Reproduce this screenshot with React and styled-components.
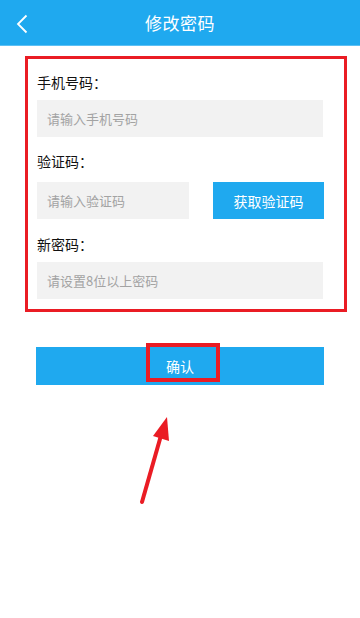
import React from "react";
import styled, { createGlobalStyle } from "styled-components";

const Global = createGlobalStyle`
  html, body { margin: 0; padding: 0; background: #fff; }
  body { font-family: "Noto Sans CJK SC", "Noto Sans", sans-serif; }
  * { box-sizing: border-box; }
`;

const Page = styled.div`
  position: relative;
  width: 360px;
  height: 618px;
  background: #fff;
  overflow: hidden;
`;

const Header = styled.header`
  height: 46px;
  background: #1fa9ef;
  display: flex;
  align-items: center;
  justify-content: center;
  position: relative;
  border-bottom: 1px solid #5cc0f4;
`;

const BackButton = styled.button`
  position: absolute;
  left: 12px;
  top: 12px;
  width: 20px;
  height: 24px;
  padding: 0;
  border: none;
  background: transparent;
  display: flex;
  align-items: center;
  justify-content: center;
`;

const Title = styled.h1`
  margin: 0;
  color: #fff;
  font-size: 17px;
  font-weight: 400;
  letter-spacing: 0.5px;
`;

const Form = styled.section`
  margin: 10px 13px 0 25px;
  border: 3px solid #ea1c24;
  padding: 13px 21px 10px 9px;
  display: flex;
  flex-direction: column;
`;

const Label = styled.div`
  font-size: 14px;
  color: #111;
  line-height: 20px;
  height: 20px;
  margin-top: ${(p) => p.$top || 0}px;
  margin-bottom: ${(p) => p.$gap}px;
`;

const Row = styled.div`
  display: flex;
  gap: 24px;
`;

const Input = styled.input`
  flex: ${(p) => (p.$narrow ? "0 0 152px" : "1 1 auto")};
  width: ${(p) => (p.$narrow ? "152px" : "100%")};
  height: 37px;
  border: none;
  outline: none;
  background: #f2f2f2;
  padding: 0 10px;
  font-family: "Noto Sans CJK SC", "Noto Sans", sans-serif;
  font-size: 13px;
  color: #333;
  &::placeholder { color: #a3a3a3; }
`;

const CodeButton = styled.button`
  flex: 0 0 111px;
  height: 37px;
  border: none;
  background: #1fa9ef;
  color: #fff;
  font-family: "Noto Sans CJK SC", "Noto Sans", sans-serif;
  font-size: 14px;
`;

const SubmitWrap = styled.div`
  margin: 35px 36px 0 36px;
  position: relative;
`;

const Submit = styled.button`
  width: 100%;
  height: 38px;
  border: none;
  background: #1fa9ef;
  color: #fff;
  font-family: "Noto Sans CJK SC", "Noto Sans", sans-serif;
  font-size: 14px;
  display: flex;
  align-items: center;
  justify-content: center;
`;

const Highlight = styled.span`
  position: absolute;
  left: 110px;
  top: -4px;
  width: 74px;
  height: 39px;
  border: 4px solid #ea1c24;
  pointer-events: none;
`;

const Arrow = styled.svg`
  position: absolute;
  left: 130px;
  top: 405px;
  width: 50px;
  height: 105px;
  overflow: visible;
`;

export default function App() {
  return (
    <Page>
      <Global />
      <Header>
        <BackButton aria-label="返回">
          <svg width="12" height="20" viewBox="0 0 12 20">
            <path d="M10.5 1.5 L2 10 L10.5 18.5" fill="none" stroke="#fff" strokeWidth="1.8" />
          </svg>
        </BackButton>
        <Title>修改密码</Title>
      </Header>
      <Form>
        <Label $gap={8}>手机号码：</Label>
        <Input placeholder="请输入手机号码" />
        <Label $top={14} $gap={11}>验证码：</Label>
        <Row>
          <Input $narrow placeholder="请输入验证码" />
          <CodeButton>获取验证码</CodeButton>
        </Row>
        <Label $top={15} $gap={8}>新密码：</Label>
        <Input placeholder="请设置8位以上密码" />
      </Form>
      <SubmitWrap>
        <Submit>确认</Submit>
        <Highlight />
      </SubmitWrap>
      <Arrow viewBox="130 405 50 105">
        <line x1="142" y1="502" x2="162" y2="432" stroke="#ea1c24" strokeWidth="4" strokeLinecap="round" />
        <polygon points="167,417 153,436 169,441" fill="#ea1c24" />
      </Arrow>
    </Page>
  );
}
